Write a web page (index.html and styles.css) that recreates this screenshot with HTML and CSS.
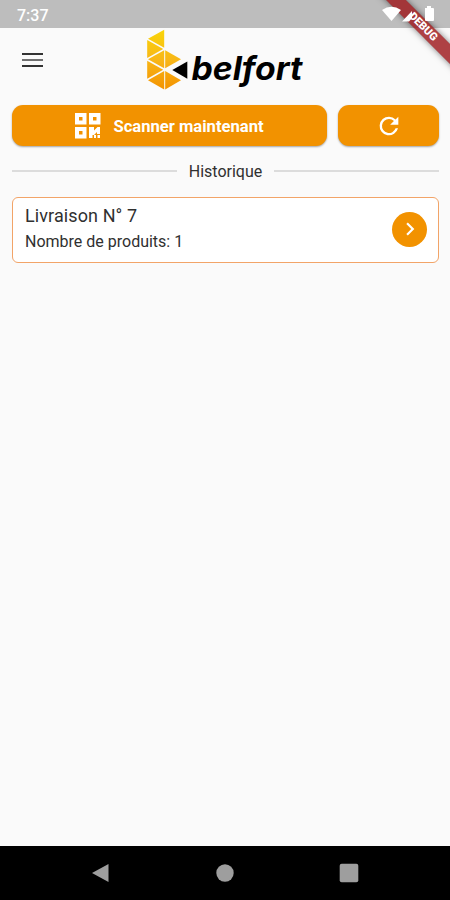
FILE: index.html
```html
<!doctype html>
<html lang="fr">
  <head>
    <meta charset="UTF-8" />
    <meta name="viewport" content="width=device-width, initial-scale=1.0" />
    <title>Belfort</title>
    <link rel="stylesheet" href="styles.css">
  </head>
  <body>
    <div class="status-bar">
      <span class="time">7:37</span>
      <svg class="status-icons" width="54" height="28" viewBox="0 0 54 28">
        <path d="M0 10 Q9.500 3.500 19 10 L9.500 21Z" />
        <path d="M20 21.500 L30 11 V18 L27 21.500Z" />
        <path d="M43 8 h2 v-2 h4 v2 h2 q1 0 1 1 v11 q0 1-1 1 h-7 q-1 0-1-1Z" />
      </svg>
    </div>
    <div class="debug-banner">DEBUG</div>

    <header class="app-bar">
      <button class="menu-button" aria-label="Menu">
        <span></span>
        <span></span>
        <span></span>
      </button>
      <svg class="logo" width="160" height="64" viewBox="0 0 160 64">
        <defs>
          <linearGradient id="gold" gradientUnits="userSpaceOnUse" x1="0" y1="2" x2="0" y2="62">
            <stop offset="0" stop-color="#f9d509" />
            <stop offset="0.5" stop-color="#f8b617" />
            <stop offset="1" stop-color="#f39200" />
          </linearGradient>
        </defs>
        <g fill="url(#gold)">
          <path d="M19.200 1.700 V19.700 L3 10.700Z" />
          <path d="M2.200 12 V30 L18.200 21Z" />
          <path d="M19.200 22.300 V40.300 L3 31.300Z" />
          <path d="M20.200 22.300 V40.300 L36 31.300Z" />
          <path d="M2.200 32.700 V50.700 L18.200 41.700Z" />
          <path d="M19.200 43 V61.500 L3 52.200Z" />
          <path d="M20.200 43 V61.500 L36 52.200Z" />
        </g>
        <path d="M27.300 42 L42.300 33.500 V50.700Z" />
        <text x="46.500" y="51.500" textLength="111" lengthAdjust="spacingAndGlyphs">belfort</text>
      </svg>
    </header>

    <main>
      <div class="actions">
        <button class="btn btn-scan">
          <svg width="26" height="26" viewBox="0 0 26 26">
            <path fill-rule="evenodd" d="M0 0h11.500v11.500H0Z M4 4v3.500h3.500V4Z M14 0h11.500v11.500H14Z M18 4v3.500h3.500V4Z M0 14h11.500v11.500H0Z M4 18v3.500h3.500V18Z" />
            <path d="M14 14h5v3.500l3.500-3.500h2.500v7h-3v-2l-3 3h-1.500v3H14Z M19 22h2v3h-2Z M22.500 22h2.500v3h-2.500Z" />
          </svg>
          Scanner maintenant
        </button>
        <button class="btn btn-refresh" aria-label="Actualiser">
          <svg width="28" height="28" viewBox="0 0 24 24">
            <path d="M17.650 6.350A7.960 7.960 0 0 0 12 4a8 8 0 1 0 7.730 10h-2.080A6 6 0 1 1 12 6c1.660 0 3.140.69 4.220 1.780L13 11h7V4Z" />
          </svg>
        </button>
      </div>

      <h2 class="divider">Historique</h2>

      <div class="delivery">
        <div>
          <p class="delivery-title">Livraison N° 7</p>
          <p class="delivery-count">Nombre de produits: 1</p>
        </div>
        <button class="btn-open" aria-label="Ouvrir">
          <svg width="26" height="26" viewBox="0 0 24 24">
            <path d="M10 6 8.590 7.410 13.170 12l-4.580 4.590L10 18l6-6Z" />
          </svg>
        </button>
      </div>
    </main>

    <nav class="nav-bar">
      <svg width="20" height="20" viewBox="0 0 20 20"><path d="M1 10 17.500 1 V19Z" /></svg>
      <svg width="20" height="20" viewBox="0 0 20 20"><circle cx="10" cy="10" r="8.700" /></svg>
      <svg width="20" height="20" viewBox="0 0 20 20"><rect x="0.700" y="0.700" width="18.600" height="18.600" rx="2" /></svg>
    </nav>
  </body>
</html>
```
FILE: styles.css
```css
* {
  box-sizing: border-box;
}

body {
  display: flex;
  flex-direction: column;
  position: relative;
  height: 900px;
  margin: 0;
  overflow: hidden;
  background-color: #fafafa;
  color: #303030;
  font-family: Roboto, sans-serif;
}

h2,
p {
  margin: 0;
  font-weight: 400;
}

button {
  padding: 0;
  border: none;
  background: none;
  font-family: inherit;
}

svg {
  display: block;
}

.status-bar {
  display: flex;
  justify-content: space-between;
  height: 28px;
  padding: 0 14px 0 17px;
  background-color: #bdbdbd;
  color: #fff;
}

.time {
  font-size: 16px;
  font-weight: 500;
  line-height: 31px;
}

/* system icons stay above the debug banner */
.status-icons {
  position: relative;
  z-index: 1;
  fill: #fff;
}

.debug-banner {
  position: absolute;
  top: 20px;
  left: 363px;
  width: 120px;
  height: 14px;
  transform: rotate(45deg);
  background-color: rgba(158, 24, 28, 0.82);
  box-shadow: 0 0 6px rgba(0, 0, 0, 0.5);
  color: #fff;
  font-size: 11px;
  font-weight: 900;
  line-height: 14px;
  text-align: center;
}

.app-bar {
  display: flex;
  align-items: flex-start;
  height: 77px;
}

.menu-button {
  display: flex;
  flex-direction: column;
  gap: 4px;
  width: 21px;
  margin: 25px 0 0 22px;
}

.menu-button span {
  height: 2px;
  background-color: #333;
}

.menu-button span:nth-child(2) {
  background-color: #707070;
}

.logo {
  margin-left: 102px;
}

.logo text {
  font-family: Inter, sans-serif;
  font-size: 32px;
  font-style: italic;
  font-weight: 700;
}

main {
  flex: 1;
  padding: 0 11px 0 12px;
}

.actions {
  display: flex;
  gap: 11px;
}

.btn {
  display: flex;
  align-items: center;
  justify-content: center;
  height: 41px;
  border-radius: 11px;
  background-color: #f29200;
  box-shadow: 0 1px 2px rgba(0, 0, 0, 0.35);
  color: #fff;
  fill: #fff;
}

.btn-scan {
  flex: 1;
  gap: 12px;
  padding-top: 1px;
  font-size: 16.6px;
  font-weight: 700;
}

.btn-refresh {
  width: 101px;
}

.divider {
  display: flex;
  align-items: center;
  gap: 12px;
  height: 20px;
  margin: 15px 0 16px;
  font-size: 16px;
}

.divider::before,
.divider::after {
  content: "";
  flex: 1;
  height: 2px;
  background-color: #dcdcdc;
}

.delivery {
  display: flex;
  align-items: center;
  justify-content: space-between;
  height: 66px;
  padding: 0 11px 2px 12px;
  border: 1px solid #f2a468;
  border-radius: 6px;
  background-color: #fff;
}

.delivery-title {
  font-size: 18px;
  line-height: 26px;
  letter-spacing: 0.1px;
}

.delivery-count {
  font-size: 16px;
  line-height: 26px;
}

.btn-open {
  display: flex;
  align-items: center;
  justify-content: center;
  width: 35px;
  height: 35px;
  border-radius: 50%;
  background-color: #f29200;
  fill: #fff;
}

.nav-bar {
  display: flex;
  align-items: center;
  justify-content: space-between;
  height: 54px;
  padding: 0 91px;
  background-color: #000;
  fill: #9e9e9e;
}
```
